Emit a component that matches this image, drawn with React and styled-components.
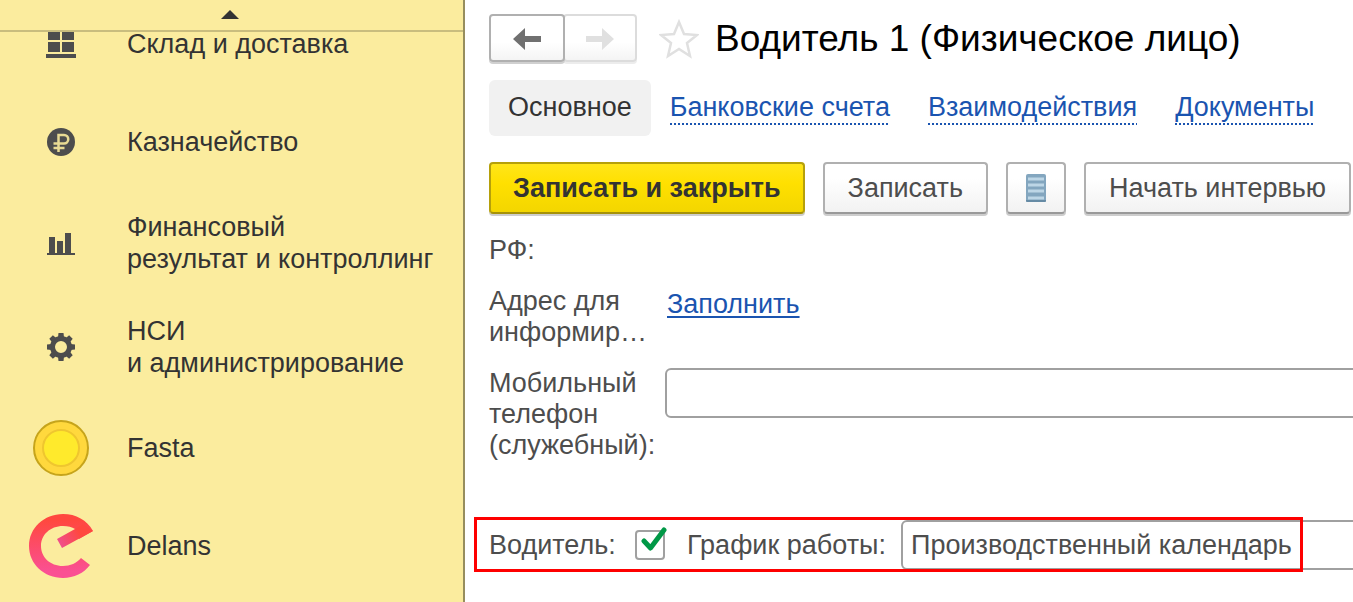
import React from "react";
import styled, { createGlobalStyle } from "styled-components";

const GlobalStyle = createGlobalStyle`
	* {
		box-sizing: border-box;
	}
	body {
		margin: 0;
		background: #fff;
		color: #4d4d4d;
		font-family: "Liberation Sans", Arial, sans-serif;
		font-size: 27px;
		overflow: hidden;
	}
	button,
	input {
		font: inherit;
		color: inherit;
	}
`;

const Layout = styled.div`
	display: grid;
	grid-template-columns: 465px minmax(0, 1fr);
	height: 100vh;
`;

const Sidebar = styled.nav`
	display: flex;
	flex-direction: column;
	min-height: 0;
	background: #fbec9e;
	border-right: 2px solid #978e5e;
	color: #333;
	overflow: hidden;
`;

const ScrollUp = styled.button`
	position: relative;
	z-index: 1;
	display: flex;
	flex: none;
	justify-content: center;
	align-items: center;
	height: 32px;
	padding: 0 4px 0 0;
	border: 0;
	border-bottom: 2px solid #c9bd7e;
	background: #fbec9e;
`;

/* the list is scrolled a little, so the first section goes under the arrow */
const SectionList = styled.ul`
	margin: -37px 0 0;
	padding: 0;
	list-style: none;
`;

const SectionLink = styled.a`
	display: grid;
	grid-template-columns: 122px 1fr;
	align-items: center;
	min-height: 98px;
	padding: 20px 0;
	color: inherit;
	line-height: 32px;
	text-decoration: none;
	white-space: pre-line;
`;

const SectionIcon = styled.span`
	display: flex;
	justify-content: center;
	margin: -4px 0;
`;

const SectionName = styled.span`
	padding-left: 5px;
`;

const Main = styled.main`
	min-width: 0;
	padding: 14px 0 0 24px;
	overflow: hidden;
`;

const Header = styled.header`
	display: flex;
	align-items: center;
	height: 50px;
	white-space: nowrap;
`;

const HistoryButton = styled.button`
	position: relative;
	z-index: ${(props) => (props.$next ? 0 : 1)};
	display: flex;
	justify-content: center;
	align-items: center;
	width: ${(props) => (props.$next ? "74px" : "76px")};
	height: 48px;
	margin: 0 0 2px ${(props) => (props.$next ? "-2px" : "0")};
	padding: 2px 0 0;
	border: 2px solid ${(props) => (props.$next ? "#dcdcdc" : "#b0b0b0")};
	border-radius: 4px;
	background: linear-gradient(#fff 60%, #f4f4f4);
	box-shadow: 0 2px 0 ${(props) => (props.$next ? "#ececec" : "#d0d0d0")};
	color: ${(props) => (props.$next ? "#e0e0e0" : "#707070")};
`;

const FavoriteButton = styled.button`
	display: flex;
	margin: 0 16px 0 22px;
	padding: 0;
	border: 0;
	background: none;
`;

const Title = styled.h1`
	margin: 0;
	color: #000;
	font-size: 37px;
	font-weight: 400;
`;

const Tabs = styled.div`
	display: flex;
	margin-top: 16px;
	white-space: nowrap;
`;

const Tab = styled.a`
	height: 56px;
	padding: 12px 19px;
	border-radius: 6px;
	background: ${(props) => (props.$active ? "#f1f1f1" : "none")};
	color: ${(props) => (props.$active ? "#333" : "#1a54b0")};
	line-height: 30px;
	text-decoration: none;

	span {
		display: block;
		height: 33px;
		background: ${(props) =>
			props.$active
				? "none"
				: "repeating-linear-gradient(90deg, #1a54b0 0 2px, transparent 2px 4px) bottom / 100% 2px no-repeat"};
	}
`;

const Toolbar = styled.div`
	display: flex;
	gap: 18px;
	margin-top: 26px;
`;

const Button = styled.button`
	display: flex;
	flex: none;
	justify-content: center;
	align-items: center;
	height: 52px;
	padding: 0 ${(props) => (props.$icon ? "17px" : "23px")};
	border: 2px solid #b0b0b0;
	border-bottom-color: #999;
	border-radius: 4px;
	background: linear-gradient(#fff 30%, #f2f2f2);
	box-shadow: 0 2px 0 #cdcdcd;
	white-space: nowrap;
`;

const PrimaryButton = styled(Button)`
	padding: 0 22px;
	border-color: #b5a00b;
	border-bottom-color: #a59109;
	background: linear-gradient(#ffe51a, #ffe000 40%, #f3d600);
	color: #333;
	font-weight: 700;
`;

const Form = styled.form`
	display: grid;
	gap: 20px;
	margin-top: 21px;
	line-height: 31px;
`;

const Field = styled.div`
	display: grid;
	grid-template-columns: 176px minmax(0, 1fr);
	align-items: start;
`;

const FieldLabel = styled.label`
	white-space: pre-line;
`;

const FillLink = styled.a`
	justify-self: start;
	margin: 3px 0 0 2px;
	color: #1a54b0;
	text-decoration-thickness: 2px;
	text-underline-offset: 3px;
`;

/* runs on past the right edge of the window */
const TextInput = styled.input`
	width: calc(100% + 8px);
	height: 50px;
	padding: 0 8px;
	border: 2px solid #a0a0a0;
	border-radius: 6px;
	background: #fff;
	outline: none;
`;

const DriverRow = styled.div`
	position: relative;
	display: grid;
	grid-template-columns: 146px 52px 214px minmax(0, 1fr);
	align-items: center;
	margin-top: 39px;
	white-space: nowrap;
`;

const Highlight = styled.div`
	position: absolute;
	inset: -3px 50px -2px -15px;
	border: 3px solid #fe0000;
	pointer-events: none;
`;

const CheckWrap = styled.span`
	position: relative;
	display: flex;
	width: 32px;
	height: 30px;

	svg {
		position: absolute;
		left: 5px;
		top: -3px;
		pointer-events: none;
	}
	input:not(:checked) + svg {
		display: none;
	}
`;

const Checkbox = styled.input`
	appearance: none;
	width: 30px;
	height: 30px;
	margin: 0;
	border: 2px solid #a0a0a0;
	border-radius: 4px;
	background: #fff;
`;

const WarehouseIcon = () => (
	<svg width="30" height="34" viewBox="0 0 30 34" fill="#4d4d4d">
		<path d="M2 0h12v13H2zM16 0h12v13H16zM2 15h12v10H2zM16 15h12v10H16zM0 27h30v4H0z" />
	</svg>
);

const RubleIcon = () => (
	<svg width="28" height="28" viewBox="0 0 28 28" fill="none">
		<circle cx="14" cy="14" r="14" fill="#4d4d4d" />
		<path
			d="M11.500 24V7h5.500a4 4 0 0 1 0 8.500H6.500M6.500 20h11"
			stroke="#e8da93"
			strokeWidth="2.500"
		/>
	</svg>
);

const ChartIcon = () => (
	<svg width="28" height="24" viewBox="0 0 28 24" fill="#4d4d4d">
		<path d="M2 6h6v16H2zM10 10h6v12h-6zM18 2h6v20h-6zM0 22h28v2H0z" />
	</svg>
);

const GearIcon = () => (
	<svg width="28" height="28" viewBox="-14 -14 28 28" fill="#4d4d4d">
		<circle r="8.500" fill="none" stroke="#4d4d4d" strokeWidth="5" />
		{[0, 45, 90, 135, 180, 225, 270, 315].map((angle) => (
			<path
				key={angle}
				d="M-3-9.500 -2.500-14h5L3-9.500z"
				transform={`rotate(${angle})`}
			/>
		))}
	</svg>
);

const CoinIcon = () => (
	<svg width="58" height="58" viewBox="0 0 58 58">
		<circle cx="29" cy="29" r="27" fill="#ffd83d" stroke="#c6a41b" strokeWidth="2" />
		<circle cx="29" cy="29" r="18" fill="#ffea2c" stroke="#efc62f" strokeWidth="2" />
	</svg>
);

const DelansIcon = () => (
	<svg width="64" height="64" viewBox="0 0 64 64">
		<defs>
			<linearGradient id="delans" x1="0" y1="0" x2="0" y2="1">
				<stop offset="0.1" stopColor="#ff483f" />
				<stop offset="0.9" stopColor="#fa5093" />
			</linearGradient>
			<linearGradient
				id="delansBar"
				gradientUnits="userSpaceOnUse"
				x1="30"
				y1="30"
				x2="50"
				y2="18"
			>
				<stop offset="0" stopColor="#ef4f8e" />
				<stop offset="1" stopColor="#ff483f" />
			</linearGradient>
		</defs>
		<path
			d="M64 17C58 6 47 0 34 0C15 0 0 14 0 32S15 64 34 64C45 64 55 59 61 51L52 44C48 49 41 52 34 52C21 52 12 43 12 32S21 12 34 12C39 12 43 13 46 15L50 25z"
			fill="url(#delans)"
		/>
		<path d="M46 15L28 25L33 34L64 17L54 10z" fill="url(#delansBar)" />
	</svg>
);

const ArrowIcon = ({ flip }) => (
	<svg width="28" height="22" viewBox="0 0 28 22" fill="currentColor">
		<path
			d={
				flip
					? "M28 11L16 0v8H0v6h16v8z"
					: "M0 11L12 0v8H28v6H12v8z"
			}
		/>
	</svg>
);

const StarIcon = () => (
	<svg width="40" height="40" viewBox="0 0 40 40" fill="none">
		<path
			d="M20 3l5 12 13 1-10 8 3 13-11-7-11 7 3-13-10-8 13-1z"
			stroke="#e0e0e0"
			strokeWidth="2.500"
		/>
	</svg>
);

const ListIcon = () => (
	<svg width="22" height="30" viewBox="0 0 22 30">
		<rect x="1" y="1" width="20" height="28" rx="2" fill="#83a6bf" />
		<path d="M1 27h20v1a1 1 0 0 1-1 1H2a1 1 0 0 1-1-1z" fill="#668ba5" />
		<path
			d="M3 6h16M3 12h16M3 18h16M3 25h16"
			stroke="#bdd6e6"
			strokeWidth="3"
		/>
	</svg>
);

const sections = [
	{ name: "Склад и доставка", Icon: WarehouseIcon },
	{ name: "Казначейство", Icon: RubleIcon },
	{ name: "Финансовый\nрезультат и контроллинг", Icon: ChartIcon },
	{ name: "НСИ\nи администрирование", Icon: GearIcon },
	{ name: "Fasta", Icon: CoinIcon },
	{ name: "Delans", Icon: DelansIcon },
];

const tabs = ["Основное", "Банковские счета", "Взаимодействия", "Документы"];

const App = () => (
	<>
		<GlobalStyle />
		<Layout>
			<Sidebar>
				<ScrollUp type="button" aria-label="Прокрутить вверх">
					<svg width="18" height="10" viewBox="0 0 18 10">
						<path d="M9 0l9 9H0z" fill="#333" />
					</svg>
				</ScrollUp>
				<SectionList>
					{sections.map(({ name, Icon }) => (
						<li key={name}>
							<SectionLink href="#">
								<SectionIcon>
									<Icon />
								</SectionIcon>
								<SectionName>{name}</SectionName>
							</SectionLink>
						</li>
					))}
				</SectionList>
			</Sidebar>
			<Main>
				<Header>
					<HistoryButton type="button" aria-label="Назад">
						<ArrowIcon />
					</HistoryButton>
					<HistoryButton type="button" aria-label="Вперед" $next>
						<ArrowIcon flip />
					</HistoryButton>
					<FavoriteButton type="button" aria-label="В избранное">
						<StarIcon />
					</FavoriteButton>
					<Title>Водитель 1 (Физическое лицо)</Title>
				</Header>
				<Tabs>
					{tabs.map((tab, i) => (
						<Tab key={tab} href="#" $active={i === 0}>
							<span>{tab}</span>
						</Tab>
					))}
				</Tabs>
				<Toolbar>
					<PrimaryButton type="button">Записать и закрыть</PrimaryButton>
					<Button type="button">Записать</Button>
					<Button type="button" aria-label="Список" $icon>
						<ListIcon />
					</Button>
					<Button type="button">Начать интервью</Button>
				</Toolbar>
				<Form>
					<Field>
						<span>РФ:</span>
					</Field>
					<Field>
						<span>
							Адрес для
							<br />
							информир…
						</span>
						<FillLink href="#">Заполнить</FillLink>
					</Field>
					<Field>
						<FieldLabel htmlFor="phone">
							{"Мобильный\nтелефон\n(служебный):"}
						</FieldLabel>
						<TextInput id="phone" type="text" />
					</Field>
					<DriverRow>
						<label htmlFor="driver">Водитель:</label>
						<CheckWrap>
							<Checkbox id="driver" type="checkbox" defaultChecked />
							<svg width="28" height="26" viewBox="0 0 28 26" fill="none">
								<path
									d="M4 14l6.500 7L24 3"
									stroke="#009846"
									strokeWidth="5"
									strokeLinejoin="round"
									strokeLinecap="round"
								/>
							</svg>
						</CheckWrap>
						<label htmlFor="schedule">График работы:</label>
						<TextInput
							id="schedule"
							type="text"
							defaultValue="Производственный календарь"
						/>
						<Highlight />
					</DriverRow>
				</Form>
			</Main>
		</Layout>
	</>
);

export default App;
